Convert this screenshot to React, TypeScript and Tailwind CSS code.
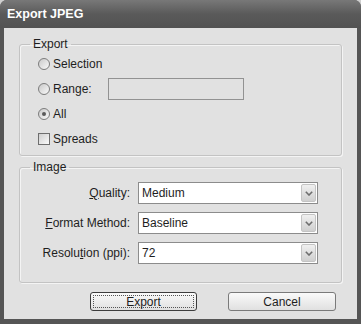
import React from 'react';

const font = { fontFamily: '"Liberation Sans", Arial, sans-serif' };

function Radio({ checked = false }: { checked?: boolean }) {
  return (
    <span className="flex h-[12px] w-[12px] shrink-0 items-center justify-center rounded-full border border-[#7c7c7c] bg-gradient-to-br from-[#c9c9c9] to-[#fafafa]">
      {checked && <span className="h-[4px] w-[4px] rounded-full bg-[#5a5a5a]" />}
    </span>
  );
}

function Chevron() {
  return (
    <svg width="8" height="5" viewBox="0 0 8 5" fill="none" stroke="#6e6e6e" strokeWidth="1.6">
      <polyline points="0.8,0.8 4,4 7.2,0.8" />
    </svg>
  );
}

function Select({ value }: { value: string }) {
  return (
    <div className="flex h-[22px] w-[180px] items-center border border-[#8c8c8c] bg-white">
      <span className="flex-1 pl-[3px] text-[12px] text-[#1e1e1e]">{value}</span>
      <span className="mr-[1px] flex h-[18px] w-[15px] items-center justify-center rounded-[2px] border border-[#c4c4c4] bg-gradient-to-b from-[#f0f0f0] to-[#cfcfcf]">
        <Chevron />
      </span>
    </div>
  );
}

const groupClass =
  'm-0 rounded-[3px] border border-[#c3c3c3] shadow-[inset_1px_1px_0_#f4f4f4,1px_1px_0_#f4f4f4]';

const legendClass = 'ml-[10px] px-[3px] text-[12px] leading-[14px] text-[#1e1e1e]';

export default function App() {
  return (
    <div className="h-[324px] w-[361px] bg-[#cfcfcf]" style={font}>
      <div className="flex h-full w-full flex-col rounded-t-[7px] bg-[#555555]">
        <div className="flex h-[28px] items-center rounded-t-[7px] bg-gradient-to-b from-[#787878] via-[#5a5a5a] to-[#525252] pl-[7px]">
          <span className="text-[12.5px] font-bold text-white">Export JPEG</span>
        </div>

        <div className="mx-[4px] mb-[5px] flex flex-1 flex-col bg-[#e1e1e1] px-[15px] pt-[9px] text-[12px] text-[#1e1e1e]">
          <fieldset className={`${groupClass} pb-[4px]`}>
            <legend className={legendClass}>Export</legend>
            <div className="px-[18px]">
              <div className="flex h-[25px] items-center gap-[3px]">
                <Radio />
                <span>Selection</span>
              </div>
              <div className="flex h-[25px] items-center">
                <div className="flex w-[70px] items-center gap-[3px]">
                  <Radio />
                  <span>Range:</span>
                </div>
                <div className="h-[22px] w-[136px] border border-[#929292] bg-[#e1e1e1]" />
              </div>
              <div className="flex h-[25px] items-center gap-[3px]">
                <Radio checked />
                <span>All</span>
              </div>
              <div className="flex h-[25px] items-center gap-[3px]">
                <span className="h-[12px] w-[12px] border border-[#6e6e6e] bg-gradient-to-br from-[#cfcfcf] to-[#fafafa]" />
                <span>Spreads</span>
              </div>
            </div>
          </fieldset>

          <fieldset className={`${groupClass} mt-[4px] pb-[14px] pt-[4px]`}>
            <legend className={legendClass}>Image</legend>
            {[
              { pre: '', u: 'Q', post: 'uality:', value: 'Medium' },
              { pre: '', u: 'F', post: 'ormat Method:', value: 'Baseline' },
              { pre: 'Resolu', u: 't', post: 'ion (ppi):', value: '72' },
            ].map((r) => (
              <div key={r.value} className="flex h-[30px] items-center">
                <span className="w-[110px] text-right">
                  {r.pre}
                  <span className="underline underline-offset-1">{r.u}</span>
                  {r.post}
                </span>
                <span className="ml-[8px]">
                  <Select value={r.value} />
                </span>
              </div>
            ))}
          </fieldset>

          <div className="mt-[9px] flex justify-end gap-[31px] pr-[6px]">
            <button
              type="button"
              className="flex h-[19px] w-[107px] items-center justify-center rounded-[3px] border border-[#3c3c3c] bg-gradient-to-b from-[#fafafa] to-[#e0e0e0] p-[2px]"
            >
              <span className="flex h-full w-full items-center justify-center border border-dotted border-[#555]">
                Export
              </span>
            </button>
            <button
              type="button"
              className="flex h-[19px] w-[108px] items-center justify-center rounded-[3px] border border-[#7a7a7a] bg-gradient-to-b from-[#fafafa] to-[#e0e0e0]"
            >
              Cancel
            </button>
          </div>
        </div>
      </div>
    </div>
  );
}
